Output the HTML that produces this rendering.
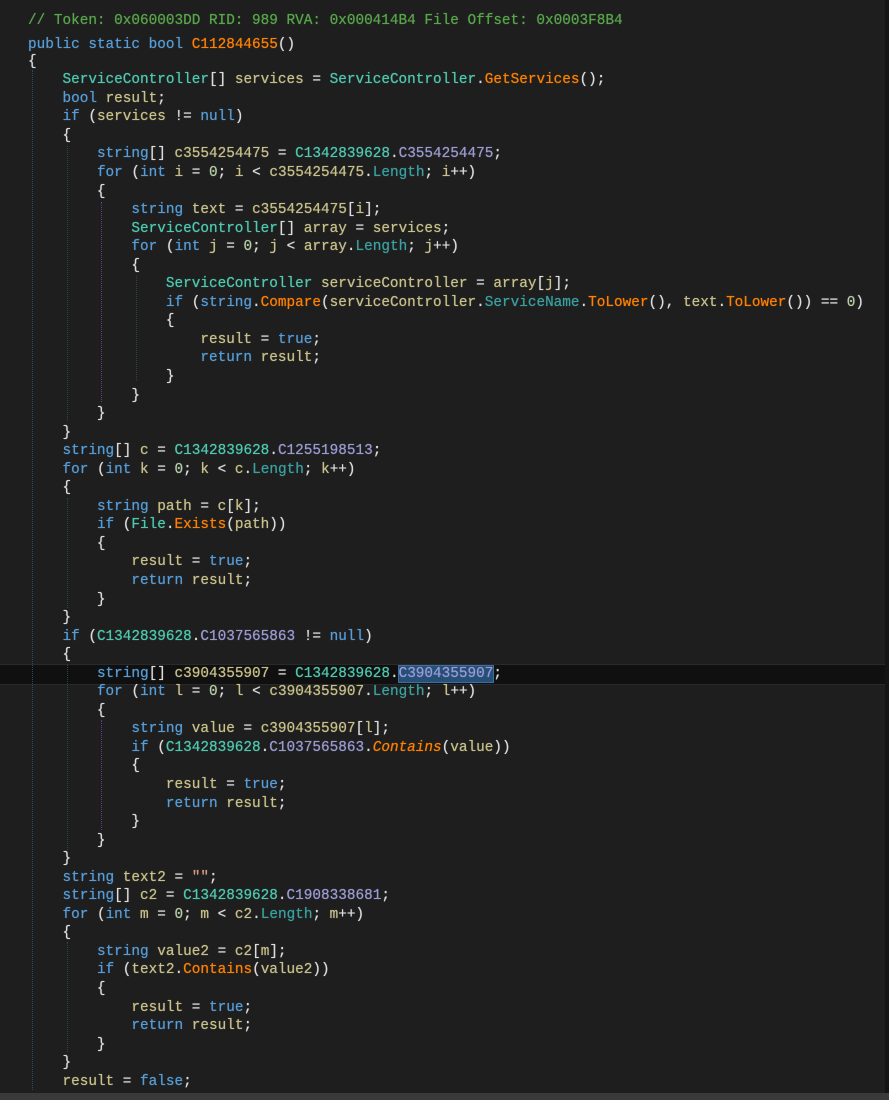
<!DOCTYPE html>
<html><head><meta charset="utf-8"><style>
html,body{margin:0;padding:0;}
body{width:889px;height:1100px;background:#1e1e1e;overflow:hidden;position:relative;font-family:"Liberation Mono",monospace;font-size:14.37px;color:#dcdcdc;}
#code{position:absolute;left:28px;top:15.6px;text-shadow:0 0 0.7px currentColor;}
.l{height:18.55px;line-height:18.55px;white-space:pre;position:relative;}
.c{color:#57a64a}.k{color:#569cd6}.t{color:#4ec9b0}.m{color:#ff8000}.v{color:#c8c08a}.f{color:#9b9bd4}.p{color:#3aa0a0}.n{color:#b5cea8}.s{color:#d69d85}.i{color:#ff8000;font-style:italic}
.hl{position:absolute;left:0;top:664px;width:885px;height:19px;background:#101010;border-top:1px solid #2a2a2a;border-bottom:1px solid #2a2a2a;}
.sel{background:#264f78;outline:1px solid #3d6ea0;}
.bar{position:absolute;left:0;top:1093px;width:889px;height:7px;background:#3a3a3a;}
.edge{position:absolute;left:885px;top:0;width:4px;height:1093px;background:#141414;}
.g{position:absolute;width:0;border-left:1px dotted;}
</style></head><body>
<div class="hl"></div>
<div class="g" style="left:32px;top:70px;height:1020px;border-color:#2b4a66"></div>
<div class="g" style="left:67px;top:146px;height:275px;border-color:#2e4a2e"></div>
<div class="g" style="left:101px;top:202px;height:200px;border-color:#6a3a8a"></div>
<div class="g" style="left:136px;top:276px;height:105px;border-color:#2e4a2e"></div>
<div class="g" style="left:67px;top:498px;height:110px;border-color:#2e4a2e"></div>
<div class="g" style="left:67px;top:665px;height:185px;border-color:#2e4a2e"></div>
<div class="g" style="left:101px;top:720px;height:110px;border-color:#6a3a8a"></div>
<div class="g" style="left:67px;top:942px;height:110px;border-color:#2e4a2e"></div>
<div id="code">
<div class="l" style="top:-4px"><span class="c">// Token: 0x060003DD RID: 989 RVA: 0x000414B4 File Offset: 0x0003F8B4</span></div>
<div class="l" style="top:1.5px"><span class="k">public static bool</span> <span class="m">C112844655</span>()</div>
<div class="l">{</div>
<div class="l">    <span class="t">ServiceController</span>[] <span class="v">services</span> = <span class="t">ServiceController</span>.<span class="m">GetServices</span>();</div>
<div class="l">    <span class="k">bool</span> <span class="v">result</span>;</div>
<div class="l">    <span class="k">if</span> (<span class="v">services</span> != <span class="k">null</span>)</div>
<div class="l">    {</div>
<div class="l">        <span class="k">string</span>[] <span class="v">c3554254475</span> = <span class="t">C1342839628</span>.<span class="f">C3554254475</span>;</div>
<div class="l">        <span class="k">for</span> (<span class="k">int</span> <span class="v">i</span> = <span class="n">0</span>; <span class="v">i</span> &lt; <span class="v">c3554254475</span>.<span class="p">Length</span>; <span class="v">i</span>++)</div>
<div class="l">        {</div>
<div class="l">            <span class="k">string</span> <span class="v">text</span> = <span class="v">c3554254475</span>[<span class="v">i</span>];</div>
<div class="l">            <span class="t">ServiceController</span>[] <span class="v">array</span> = <span class="v">services</span>;</div>
<div class="l">            <span class="k">for</span> (<span class="k">int</span> <span class="v">j</span> = <span class="n">0</span>; <span class="v">j</span> &lt; <span class="v">array</span>.<span class="p">Length</span>; <span class="v">j</span>++)</div>
<div class="l">            {</div>
<div class="l">                <span class="t">ServiceController</span> <span class="v">serviceController</span> = <span class="v">array</span>[<span class="v">j</span>];</div>
<div class="l">                <span class="k">if</span> (<span class="k">string</span>.<span class="m">Compare</span>(<span class="v">serviceController</span>.<span class="p">ServiceName</span>.<span class="m">ToLower</span>(), <span class="v">text</span>.<span class="m">ToLower</span>()) == <span class="n">0</span>)</div>
<div class="l">                {</div>
<div class="l">                    <span class="v">result</span> = <span class="k">true</span>;</div>
<div class="l">                    <span class="k">return</span> <span class="v">result</span>;</div>
<div class="l">                }</div>
<div class="l">            }</div>
<div class="l">        }</div>
<div class="l">    }</div>
<div class="l">    <span class="k">string</span>[] <span class="v">c</span> = <span class="t">C1342839628</span>.<span class="f">C1255198513</span>;</div>
<div class="l">    <span class="k">for</span> (<span class="k">int</span> <span class="v">k</span> = <span class="n">0</span>; <span class="v">k</span> &lt; <span class="v">c</span>.<span class="p">Length</span>; <span class="v">k</span>++)</div>
<div class="l">    {</div>
<div class="l">        <span class="k">string</span> <span class="v">path</span> = <span class="v">c</span>[<span class="v">k</span>];</div>
<div class="l">        <span class="k">if</span> (<span class="t">File</span>.<span class="m">Exists</span>(<span class="v">path</span>))</div>
<div class="l">        {</div>
<div class="l">            <span class="v">result</span> = <span class="k">true</span>;</div>
<div class="l">            <span class="k">return</span> <span class="v">result</span>;</div>
<div class="l">        }</div>
<div class="l">    }</div>
<div class="l">    <span class="k">if</span> (<span class="t">C1342839628</span>.<span class="f">C1037565863</span> != <span class="k">null</span>)</div>
<div class="l">    {</div>
<div class="l">        <span class="k">string</span>[] <span class="v">c3904355907</span> = <span class="t">C1342839628</span>.<span class="f sel">C3904355907</span>;</div>
<div class="l">        <span class="k">for</span> (<span class="k">int</span> <span class="v">l</span> = <span class="n">0</span>; <span class="v">l</span> &lt; <span class="v">c3904355907</span>.<span class="p">Length</span>; <span class="v">l</span>++)</div>
<div class="l">        {</div>
<div class="l">            <span class="k">string</span> <span class="v">value</span> = <span class="v">c3904355907</span>[<span class="v">l</span>];</div>
<div class="l">            <span class="k">if</span> (<span class="t">C1342839628</span>.<span class="f">C1037565863</span>.<span class="i">Contains</span>(<span class="v">value</span>))</div>
<div class="l">            {</div>
<div class="l">                <span class="v">result</span> = <span class="k">true</span>;</div>
<div class="l">                <span class="k">return</span> <span class="v">result</span>;</div>
<div class="l">            }</div>
<div class="l">        }</div>
<div class="l">    }</div>
<div class="l">    <span class="k">string</span> <span class="v">text2</span> = <span class="s">""</span>;</div>
<div class="l">    <span class="k">string</span>[] <span class="v">c2</span> = <span class="t">C1342839628</span>.<span class="f">C1908338681</span>;</div>
<div class="l">    <span class="k">for</span> (<span class="k">int</span> <span class="v">m</span> = <span class="n">0</span>; <span class="v">m</span> &lt; <span class="v">c2</span>.<span class="p">Length</span>; <span class="v">m</span>++)</div>
<div class="l">    {</div>
<div class="l">        <span class="k">string</span> <span class="v">value2</span> = <span class="v">c2</span>[<span class="v">m</span>];</div>
<div class="l">        <span class="k">if</span> (<span class="v">text2</span>.<span class="m">Contains</span>(<span class="v">value2</span>))</div>
<div class="l">        {</div>
<div class="l">            <span class="v">result</span> = <span class="k">true</span>;</div>
<div class="l">            <span class="k">return</span> <span class="v">result</span>;</div>
<div class="l">        }</div>
<div class="l">    }</div>
<div class="l">    <span class="v">result</span> = <span class="k">false</span>;</div>
</div>
<div class="edge"></div>
<div class="bar"></div>
</body></html>
